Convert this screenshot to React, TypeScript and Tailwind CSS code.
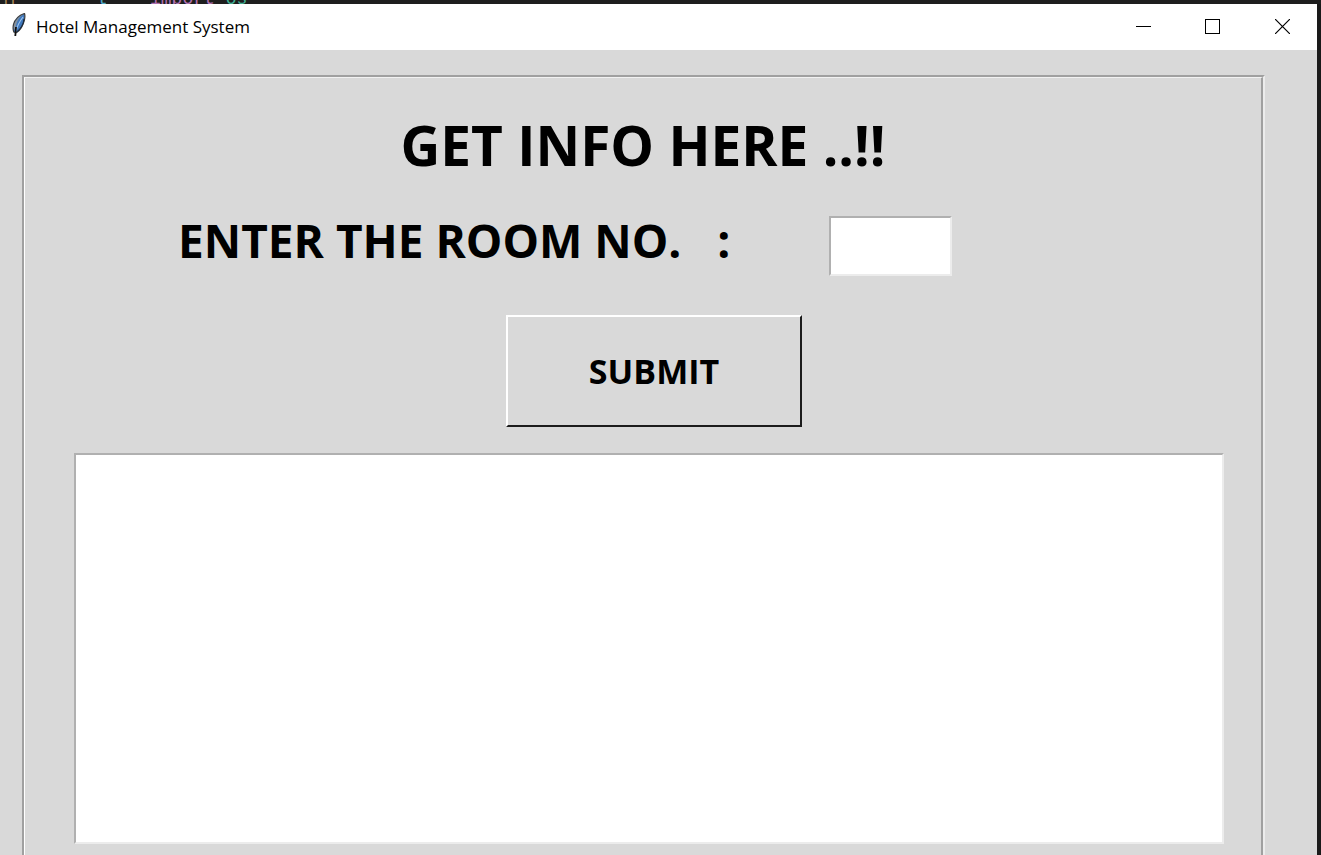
import React from "react";

function FeatherIcon() {
  return (
    <svg width="16" height="24" viewBox="0 0 16 24" aria-hidden="true">
      <path d="M13.500 0.500C9 2 4 6 2.500 11.500C1.800 14.500 2 17 2.800 19L5.500 19.500C9.500 17 12.200 12 13.400 7C14 4.500 14 2 13.500 0.500Z" fill="#3f78bd" stroke="#3c3c3c" strokeWidth="1.200" />
      <path d="M13 1C8 4 5.200 8 4.200 17L3 16C2.300 11 5 5 13 1Z" fill="#8a9299" />
      <path d="M12 4C9 8 6.200 13 5 18" fill="none" stroke="#9cc4ee" strokeWidth="1.200" />
      <path d="M13 6C12.600 11 9.500 16 6 19" fill="none" stroke="#1c2c40" strokeWidth="1.200" />
      <path d="M5 14L4.300 23" stroke="#111" strokeWidth="1.800" />
    </svg>
  );
}

function TitleBar() {
  return (
    <header className="flex h-[46px] shrink-0 items-center bg-white pl-[11px]">
      <div className="pb-1">
        <FeatherIcon />
      </div>
      <h1 className="ml-[9px] grow text-[17px] leading-6 text-black">Hotel Management System</h1>
      <div className="flex self-stretch pb-px">
        <button type="button" aria-label="Minimize" className="flex w-[68px] items-center justify-center">
          <svg width="15" height="15" viewBox="0 0 15 15" shapeRendering="crispEdges">
            <path d="M0 7.500H15" stroke="#000" />
          </svg>
        </button>
        <button type="button" aria-label="Maximize" className="flex w-[70px] items-center justify-center">
          <svg width="15" height="15" viewBox="0 0 15 15" shapeRendering="crispEdges">
            <rect x="0.500" y="0.500" width="14" height="14" fill="none" stroke="#000" />
          </svg>
        </button>
        <button type="button" aria-label="Close" className="flex w-[70px] items-center justify-center">
          <svg width="15" height="15" viewBox="0 0 15 15">
            <path d="M0 0L15 15M15 0L0 15" stroke="#000" strokeWidth="1.200" />
          </svg>
        </button>
      </div>
    </header>
  );
}

function EditorStrip() {
  return (
    <div aria-hidden="true" className="flex h-1 shrink-0 items-end overflow-hidden whitespace-pre bg-[#1e1e1e] font-['Liberation_Mono',monospace] text-[18px] leading-[10px]">
      <span className="w-[96px] pl-1 text-[#b08a5a]">M</span>
      <span className="w-[54px] text-[#4fa8c8]">l</span>
      <span className="text-[#b070b0]">import </span>
      <span className="text-[#3fae94]">os</span>
    </div>
  );
}

export default function App() {
  return (
    <div className="flex h-screen flex-col overflow-hidden bg-[#1a1a1a] font-['Open_Sans','Noto_Sans',sans-serif] text-black">
      <EditorStrip />
      <div className="mr-1 flex min-h-0 grow flex-col bg-[#d9d9d9]">
        <TitleBar />
        <main className="flex min-h-0 grow pl-[22px] pr-[52px] pt-[25px]">
          <div className="flex grow border-l-2 border-r-2 border-t-2 border-l-[#a0a0a0] border-r-[#ececec] border-t-[#a0a0a0]">
            <form
              className="flex grow flex-col border-l border-r-2 border-t border-l-white border-r-[#a0a0a0] border-t-[#f2f2f2] pb-[11px] pl-[49px] pr-[37px] pt-8"
              onSubmit={(e) => e.preventDefault()}
            >
              <h2 className="mr-3 text-center text-[55px] font-bold leading-[70px]">GET INFO HERE ..!!</h2>
              <div className="mt-9 flex h-[60px] items-start pl-[104px]">
                <label htmlFor="room" className="w-[651px] whitespace-pre text-[46px] font-bold leading-[48px]">
                  ENTER THE ROOM NO.   :
                </label>
                <input
                  id="room"
                  type="text"
                  className="h-[60px] w-[123px] border-2 border-b-[#ececec] border-l-[#b0b0b0] border-r-[#ececec] border-t-[#b0b0b0] bg-white px-2 text-[40px] outline-none"
                />
              </div>
              <button
                type="submit"
                className="ml-[10px] mt-[39px] h-[112px] w-[296px] self-center border-2 border-b-[#1c1c1c] border-l-white border-r-[#1c1c1c] border-t-white text-[34px] font-bold leading-10"
              >
                SUBMIT
              </button>
              <textarea
                aria-label="Room information"
                className="mt-[26px] w-full grow resize-none border-2 border-b-[#ececec] border-l-[#b0b0b0] border-r-[#ececec] border-t-[#b0b0b0] bg-white p-2 text-xl outline-none"
              />
            </form>
          </div>
        </main>
      </div>
    </div>
  );
}
